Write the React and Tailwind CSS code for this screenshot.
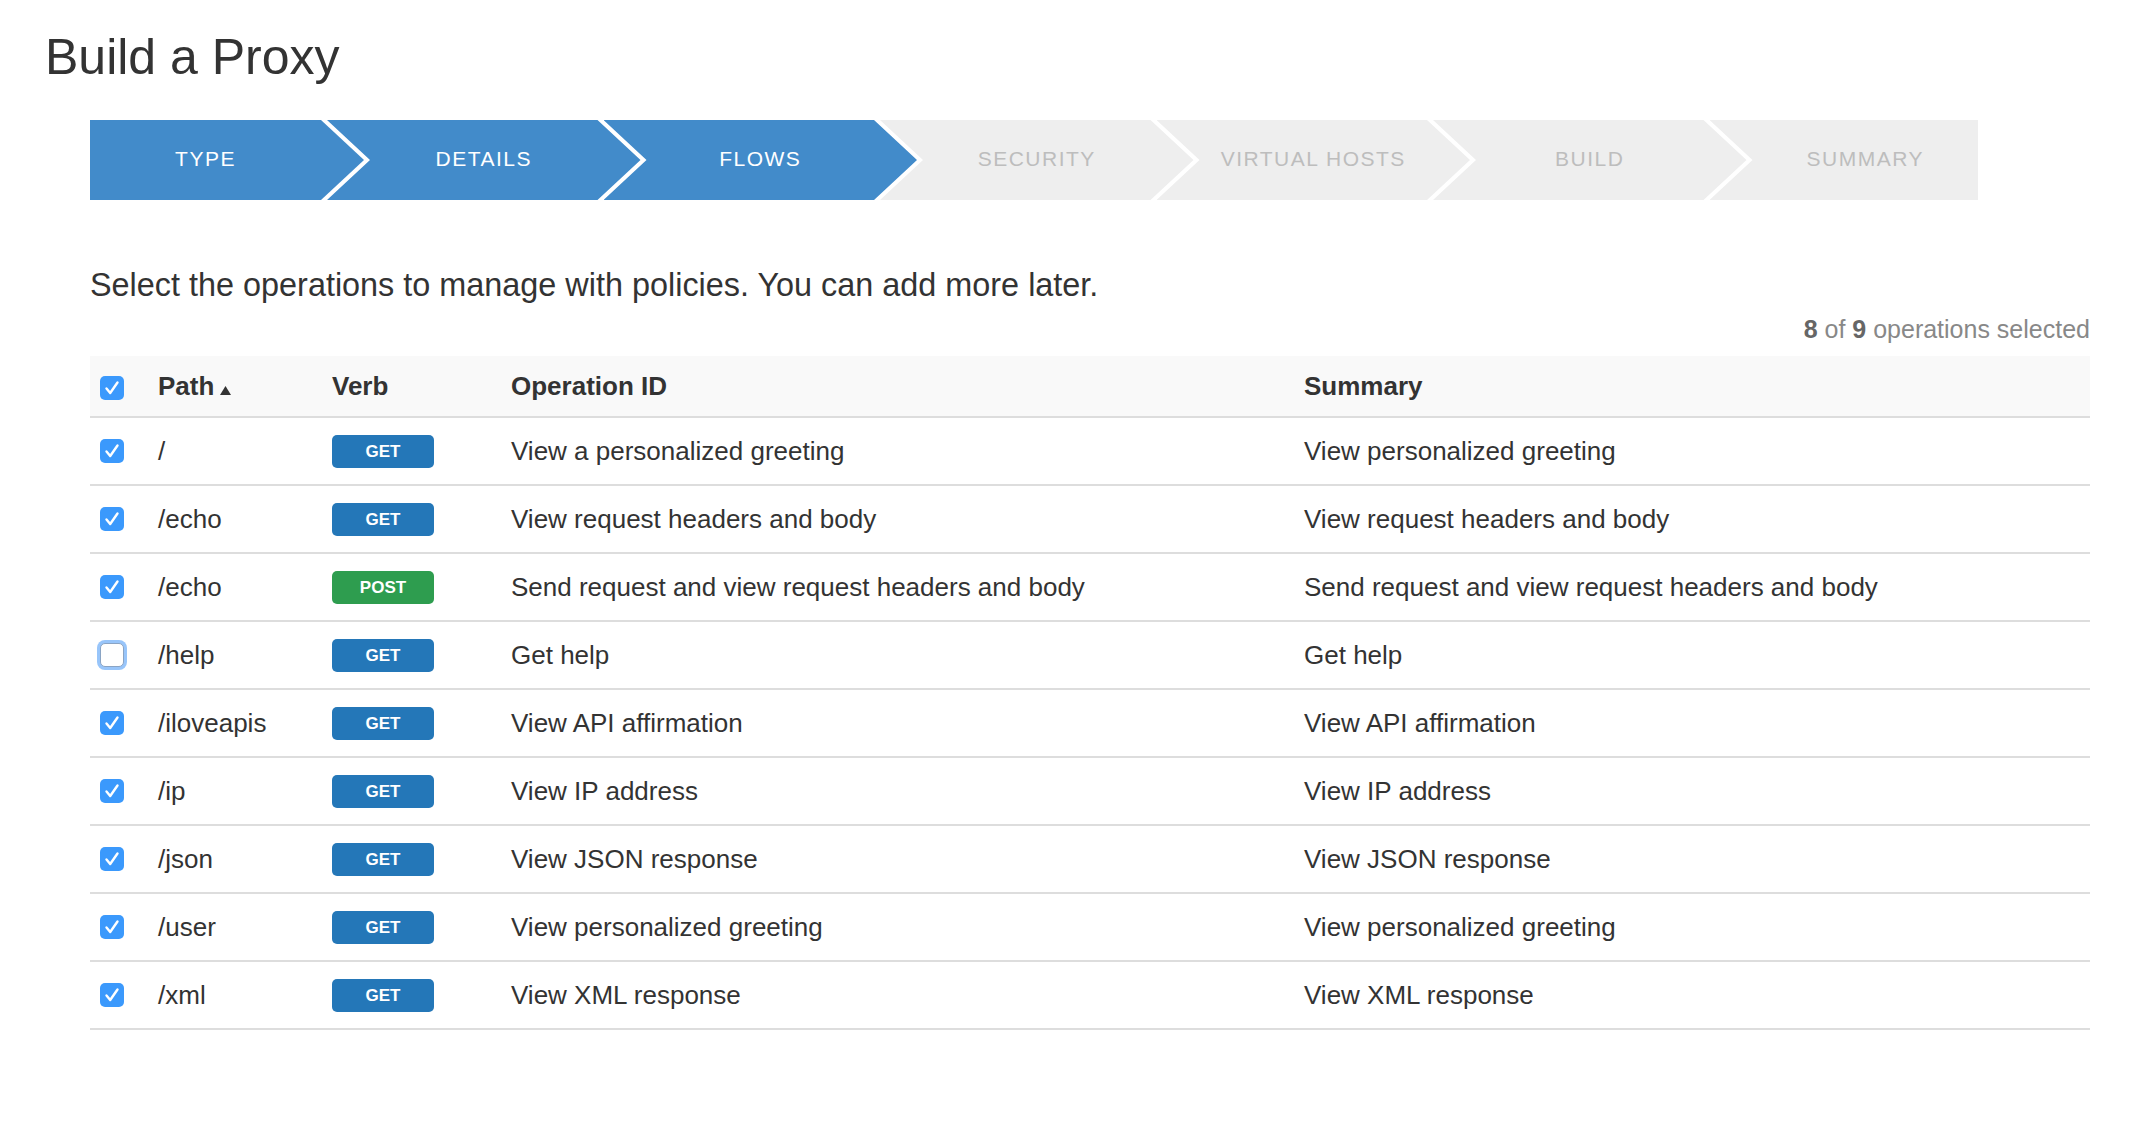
import React, { useState } from 'react';

const steps = [
  { label: 'TYPE', done: true },
  { label: 'DETAILS', done: true },
  { label: 'FLOWS', done: true },
  { label: 'SECURITY', done: false },
  { label: 'VIRTUAL HOSTS', done: false },
  { label: 'BUILD', done: false },
  { label: 'SUMMARY', done: false },
];

const operations = [
  { path: '/', verb: 'GET', id: 'View a personalized greeting', summary: 'View personalized greeting', on: true },
  { path: '/echo', verb: 'GET', id: 'View request headers and body', summary: 'View request headers and body', on: true },
  { path: '/echo', verb: 'POST', id: 'Send request and view request headers and body', summary: 'Send request and view request headers and body', on: true },
  { path: '/help', verb: 'GET', id: 'Get help', summary: 'Get help', on: false },
  { path: '/iloveapis', verb: 'GET', id: 'View API affirmation', summary: 'View API affirmation', on: true },
  { path: '/ip', verb: 'GET', id: 'View IP address', summary: 'View IP address', on: true },
  { path: '/json', verb: 'GET', id: 'View JSON response', summary: 'View JSON response', on: true },
  { path: '/user', verb: 'GET', id: 'View personalized greeting', summary: 'View personalized greeting', on: true },
  { path: '/xml', verb: 'GET', id: 'View XML response', summary: 'View XML response', on: true },
];

const Checkbox = ({ checked, onChange, className = '' }) => {
  if (!checked) {
    return (
      <button
        onClick={onChange}
        className={`w-6 h-6 rounded-[5px] bg-white border border-[#8aa4c4] ring-[3px] ring-[#98c5fa] ${className}`}
      />
    );
  }
  return (
    <button
      onClick={onChange}
      className={`w-6 h-6 rounded-[5px] bg-[#3b99fc] flex items-center justify-center ${className}`}
    >
      <svg width="24" height="24" viewBox="0 0 24 24" fill="none">
        <path d="M6.5 12.5 L10.2 17 L17.5 6.5" stroke="white" strokeWidth="2.4" strokeLinecap="round" strokeLinejoin="round" />
      </svg>
    </button>
  );
};

const Stepper = () => (
  <div className="flex h-[80px] mt-[38px]">
    {steps.map((step, i) => {
      const first = i === 0;
      const last = i === steps.length - 1;
      // each chevron overlaps the next one, leaving a thin white gap
      let shape = 'w-[313.5px] -ml-[37px] pl-[43px] pr-[43px] [clip-path:polygon(0_0,270.5px_0,313.5px_50%,270.5px_100%,0_100%,43px_50%)]';
      if (first) shape = 'w-[274px] pr-[43px] [clip-path:polygon(0_0,231px_0,274px_50%,231px_100%,0_100%)]';
      if (last) shape = 'w-[268.5px] -ml-[37px] pl-[43px] [clip-path:polygon(0_0,100%_0,100%_100%,0_100%,43px_50%)]';
      return (
        <div
          key={step.label}
          className={`${shape} shrink-0 flex items-center justify-center pb-[2px] text-[21px] tracking-[1.5px] ${
            step.done ? 'bg-[#428bca] text-white' : 'bg-[#eeeeee] text-[#bdbdbd]'
          }`}
        >
          {step.label}
        </div>
      );
    })}
  </div>
);

const VerbBadge = ({ verb }) => (
  <span
    className={`w-[102px] h-[33px] rounded-[5px] flex items-center justify-center pt-[2px] text-white font-bold text-[17px] ${
      verb === 'POST' ? 'bg-[#2e9d4f]' : 'bg-[#2477b8]'
    }`}
  >
    {verb}
  </span>
);

const App = () => {
  const [rows, setRows] = useState(operations);
  const selected = rows.filter((r) => r.on).length;
  const allOn = selected > 0;

  const toggle = (idx) => setRows(rows.map((r, i) => (i === idx ? { ...r, on: !r.on } : r)));
  const toggleAll = () => setRows(rows.map((r) => ({ ...r, on: !allOn })));

  return (
    <div className="min-h-[1122px] bg-white text-[#333] font-['Liberation_Sans',Arial,sans-serif] pt-[32px]">
      <h1 className="ml-[45px] text-[50px] leading-[50px] text-[#333]">Build a Proxy</h1>

      <div className="pl-[90px] pr-[64px]">
        <Stepper />

        <p className="mt-[69px] text-[32.4px] leading-[32px] text-[#333]">
          Select the operations to manage with policies. You can add more later.
        </p>

        <div className="mt-[16px] text-right text-[25px] leading-[25px] text-[#888]">
          <span className="font-bold text-[#666]">{selected}</span> of{' '}
          <span className="font-bold text-[#666]">{rows.length}</span> operations selected
        </div>

        <div className="mt-[14px]">
          {/* Header */}
          <div className="grid grid-cols-[68px_174px_179px_793px_1fr] h-[62px] bg-[#f9f9f9] border-b-2 border-[#dddddd] items-center text-[26px] font-bold">
            <div className="pl-[10px] flex">
              <Checkbox checked={allOn} onChange={toggleAll} className="mt-[3px]" />
            </div>
            <div className="flex items-end gap-[6px]">
              <span>Path</span>
              <svg width="11" height="9" viewBox="0 0 11 9" className="mb-[11px]">
                <polygon points="5.5,0 11,9 0,9" fill="#333" />
              </svg>
            </div>
            <div>Verb</div>
            <div>Operation ID</div>
            <div>Summary</div>
          </div>

          {/* Rows */}
          {rows.map((op, i) => (
            <div
              key={i}
              className="grid grid-cols-[68px_174px_179px_793px_1fr] h-[68px] border-b-2 border-[#dddddd] items-center text-[26px]"
            >
              <div className="pl-[10px] flex">
                <Checkbox checked={op.on} onChange={() => toggle(i)} />
              </div>
              <div>{op.path}</div>
              <div>
                <VerbBadge verb={op.verb} />
              </div>
              <div>{op.id}</div>
              <div>{op.summary}</div>
            </div>
          ))}
        </div>
      </div>
    </div>
  );
};

export default App;
